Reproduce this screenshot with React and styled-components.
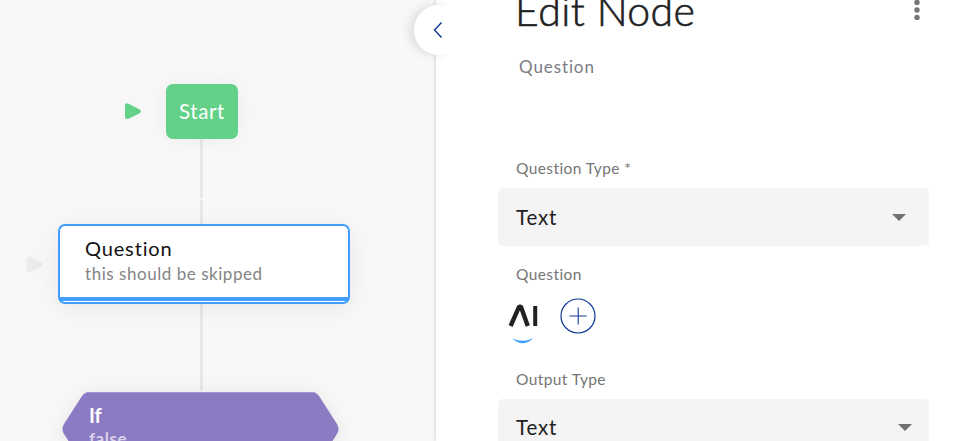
import React from 'react';
import styled, { createGlobalStyle } from 'styled-components';

const GlobalStyle = createGlobalStyle`
  * {
    box-sizing: border-box;
  }
  body {
    margin: 0;
    overflow: hidden;
    font-family: Lato, 'Open Sans', sans-serif;
    background: #fff;
  }
`;

const Page = styled.div`
  display: flex;
  width: 957px;
  height: 441px;
  overflow: hidden;
`;

/* Flow canvas */
const Canvas = styled.div`
  position: relative;
  flex: 0 0 436px;
  background: #f8f8f8;
  overflow: hidden;
`;

const Edge = styled.div`
  position: absolute;
  left: 200px;
  top: ${props => props.$top}px;
  width: 3px;
  height: ${props => props.$height}px;
  background: #e9e9e9;
`;

const PlayMark = styled.svg`
  position: absolute;
  left: ${props => props.$left}px;
  top: ${props => props.$top}px;
  width: 17px;
  height: 17px;
  overflow: visible;
  fill: ${props => props.$color};
  filter: drop-shadow(0 0 9px rgba(0, 0, 0, 0.03));
`;

const StartNode = styled.div`
  position: absolute;
  left: 166px;
  top: 84px;
  width: 72px;
  height: 55px;
  padding-bottom: 2px;
  display: flex;
  align-items: center;
  justify-content: center;
  border-radius: 7px;
  background: #63d188;
  color: #fff;
  font-size: 20.5px;
  letter-spacing: 0.6px;
  box-shadow: 0 0 24px rgba(0, 0, 0, 0.05);
`;

const QuestionNode = styled.div`
  position: absolute;
  left: 58px;
  top: 224px;
  width: 292px;
  height: 80px;
  padding: 10px 25px 0;
  border: 2px solid #409eff;
  border-radius: 7px;
  background: linear-gradient(#409eff, #409eff) 0 71px / 100% 4px no-repeat #fff;
  box-shadow: 0 4px 26px rgba(0, 0, 0, 0.07);
`;

const NodeTitle = styled.div`
  font-size: 20px;
  line-height: 25px;
  letter-spacing: ${props => props.$spacing}px;
  font-weight: ${props => (props.$bold ? 700 : 400)};
  color: ${props => props.$color};
`;

const NodeText = styled.div`
  font-size: 17px;
  line-height: ${props => (props.$bold ? 21 : 26)}px;
  letter-spacing: ${props => props.$spacing}px;
  font-weight: ${props => (props.$bold ? 700 : 400)};
  color: ${props => props.$color};
  white-space: nowrap;
`;

const IfNode = styled.div`
  position: absolute;
  left: 62px;
  top: 392px;
  width: 277px;
  height: 74px;
  padding: 11px 27px;
`;

const Hexagon = styled.svg`
  position: absolute;
  inset: 0;
  overflow: visible;
  filter: drop-shadow(0 2px 10px rgba(0, 0, 0, 0.08));
`;

const IfContent = styled.div`
  position: relative;
`;

/* Editor panel */
const Panel = styled.div`
  position: relative;
  flex: 1;
  display: flex;
  flex-direction: column;
  padding: 0 28px 0 62px;
  background: #fff;
  box-shadow: 0 0 4px rgba(0, 0, 0, 0.2);

  > * {
    flex-shrink: 0;
  }
`;

const CollapseButton = styled.button`
  position: absolute;
  left: -22px;
  top: 5px;
  width: 50px;
  height: 50px;
  padding: 0;
  border: none;
  border-radius: 50%;
  background: #fff;
  box-shadow: -5px 0 10px rgba(0, 0, 0, 0.1);
  clip-path: inset(-20px 17px -20px -20px);
`;

const CollapseIcon = styled.svg`
  display: block;
  width: 50px;
  height: 50px;
`;

const Header = styled.div`
  display: flex;
  justify-content: space-between;
  height: 55px;
  padding-left: 17px;
`;

const Title = styled.h1`
  margin: -14px 0 0;
  font-size: 41px;
  line-height: 49px;
  font-weight: 300;
  letter-spacing: 0.4px;
  color: #212121;
  -webkit-text-stroke: 0.6px #212121;
`;

const MenuIcon = styled.svg`
  width: 6px;
  height: 22px;
  margin-right: 9px;
`;

const Subtitle = styled.div`
  height: 103px;
  padding-left: 21px;
  font-size: 17px;
  line-height: 24px;
  letter-spacing: 0.9px;
  color: #7d7b85;
`;

const Label = styled.label`
  display: block;
  padding-left: 18px;
  font-size: 15.5px;
  line-height: 20px;
  letter-spacing: 0.4px;
  color: #757575;
`;

const Select = styled.div`
  display: flex;
  align-items: center;
  justify-content: space-between;
  height: ${props => props.$height}px;
  margin: ${props => props.$margin};
  padding: 0 ${props => props.$right}px 0 18px;
  border-radius: 5px;
  background: #f4f4f4;
  color: #212121;
  font-size: 20.5px;
  letter-spacing: 0.8px;
`;

const Arrow = styled.svg`
  width: 14px;
  height: 7px;
  fill: #707070;
`;

const Tools = styled.div`
  display: flex;
  align-items: flex-start;
  gap: 20px;
  height: 71px;
  margin-top: 14px;
  padding-left: 9px;
`;

const AiLogo = styled.svg`
  width: 33px;
  height: 50px;
`;

const AddButton = styled.button`
  width: 36px;
  height: 36px;
  padding: 0;
  border: none;
  background: none;
`;

function Play({ left, top, color }) {
  return (
    <PlayMark $left={left} $top={top} $color={color} viewBox="0 0 17 17">
      <path d="M0 2.4Q0 0 2.5 .4L4 .9L14.7 6.4Q17 8.2 14.7 10.2L4 15.6L2.5 16Q0 16.5 0 14Z" />
    </PlayMark>
  );
}

function SelectField({ value, height, margin, right }) {
  return (
    <Select $height={height} $margin={margin} $right={right}>
      {value}
      <Arrow viewBox="0 0 14 7">
        <path d="M0 0H14L7 7Z" />
      </Arrow>
    </Select>
  );
}

function FlowCanvas() {
  return (
    <Canvas>
      <Edge $top={139} $height={60} />
      <Edge $top={200} $height={25} />
      <Edge $top={303} $height={88} />
      <Play left={125} top={103} color="#63d188" />
      <StartNode>Start</StartNode>
      <Play left={27} top={256} color="#ebebeb" />
      <QuestionNode>
        <NodeTitle $color="#111" $spacing={0.85}>Question</NodeTitle>
        <NodeText $color="#858585" $spacing={0.54}>this should be skipped</NodeText>
      </QuestionNode>
      <IfNode>
        <Hexagon width="277" height="74" viewBox="0 0 277 74">
          <path
            fill="#8c7bc3"
            d="M27 0H250Q254 0 257 4L275 32Q278 37 275 42L257 70Q254 74 250 74H27Q23 74 20 70L2 42Q-1 37 2 32L20 4Q23 0 27 0Z"
          />
          <path stroke="#a194d0" d="M26 .5H251" />
        </Hexagon>
        <IfContent>
          <NodeTitle $bold $color="#fff" $spacing={0}>If</NodeTitle>
          <NodeText $bold $color="#d8d1ec" $spacing={0.5}>false</NodeText>
        </IfContent>
      </IfNode>
    </Canvas>
  );
}

function EditPanel() {
  return (
    <Panel>
      <CollapseButton aria-label="Collapse">
        <CollapseIcon viewBox="0 0 50 50">
          <path d="M27.5 17.5L20.5 25L27.5 32.5" fill="none" stroke="#0d3795" strokeWidth="1.4" />
        </CollapseIcon>
      </CollapseButton>
      <Header>
        <Title>Edit Node</Title>
        <MenuIcon viewBox="0 0 6 22" fill="#757575">
          <circle cx="3" cy="2.4" r="2.7" />
          <circle cx="3" cy="10" r="2.7" />
          <circle cx="3" cy="17.4" r="2.7" />
        </MenuIcon>
      </Header>
      <Subtitle>Question</Subtitle>
      <Label>Question Type *</Label>
      <SelectField value="Text" height={58} margin="10px 0 18px" right={23} />
      <Label>Question</Label>
      <Tools>
        <AiLogo viewBox="0 0 33 50">
          <path d="M3.6 28L11.9 9.2Q13 8 14.1 9.2L20.8 28" fill="none" stroke="#212121" strokeWidth="4.4" />
          <path d="M28.2 8V28" stroke="#212121" strokeWidth="4" />
          <path d="M5 40.2Q15.5 45.2 26 40.2Q16 50.5 5 40.2Z" fill="#409eff" />
        </AiLogo>
        <AddButton aria-label="Add">
          <svg width="36" height="36" viewBox="0 0 36 36" fill="none" stroke="#0d3795">
            <circle cx="18" cy="18" r="17" strokeWidth="1.2" />
            <path d="M9.5 18H26.5M18.2 9.5V26.5" strokeWidth="1.1" />
          </svg>
        </AddButton>
      </Tools>
      <Label>Output Type</Label>
      <SelectField value="Text" height={56} margin="10px 0 0" right={17} />
    </Panel>
  );
}

function App() {
  return (
    <>
      <GlobalStyle />
      <Page>
        <FlowCanvas />
        <EditPanel />
      </Page>
    </>
  );
}

export default App;
